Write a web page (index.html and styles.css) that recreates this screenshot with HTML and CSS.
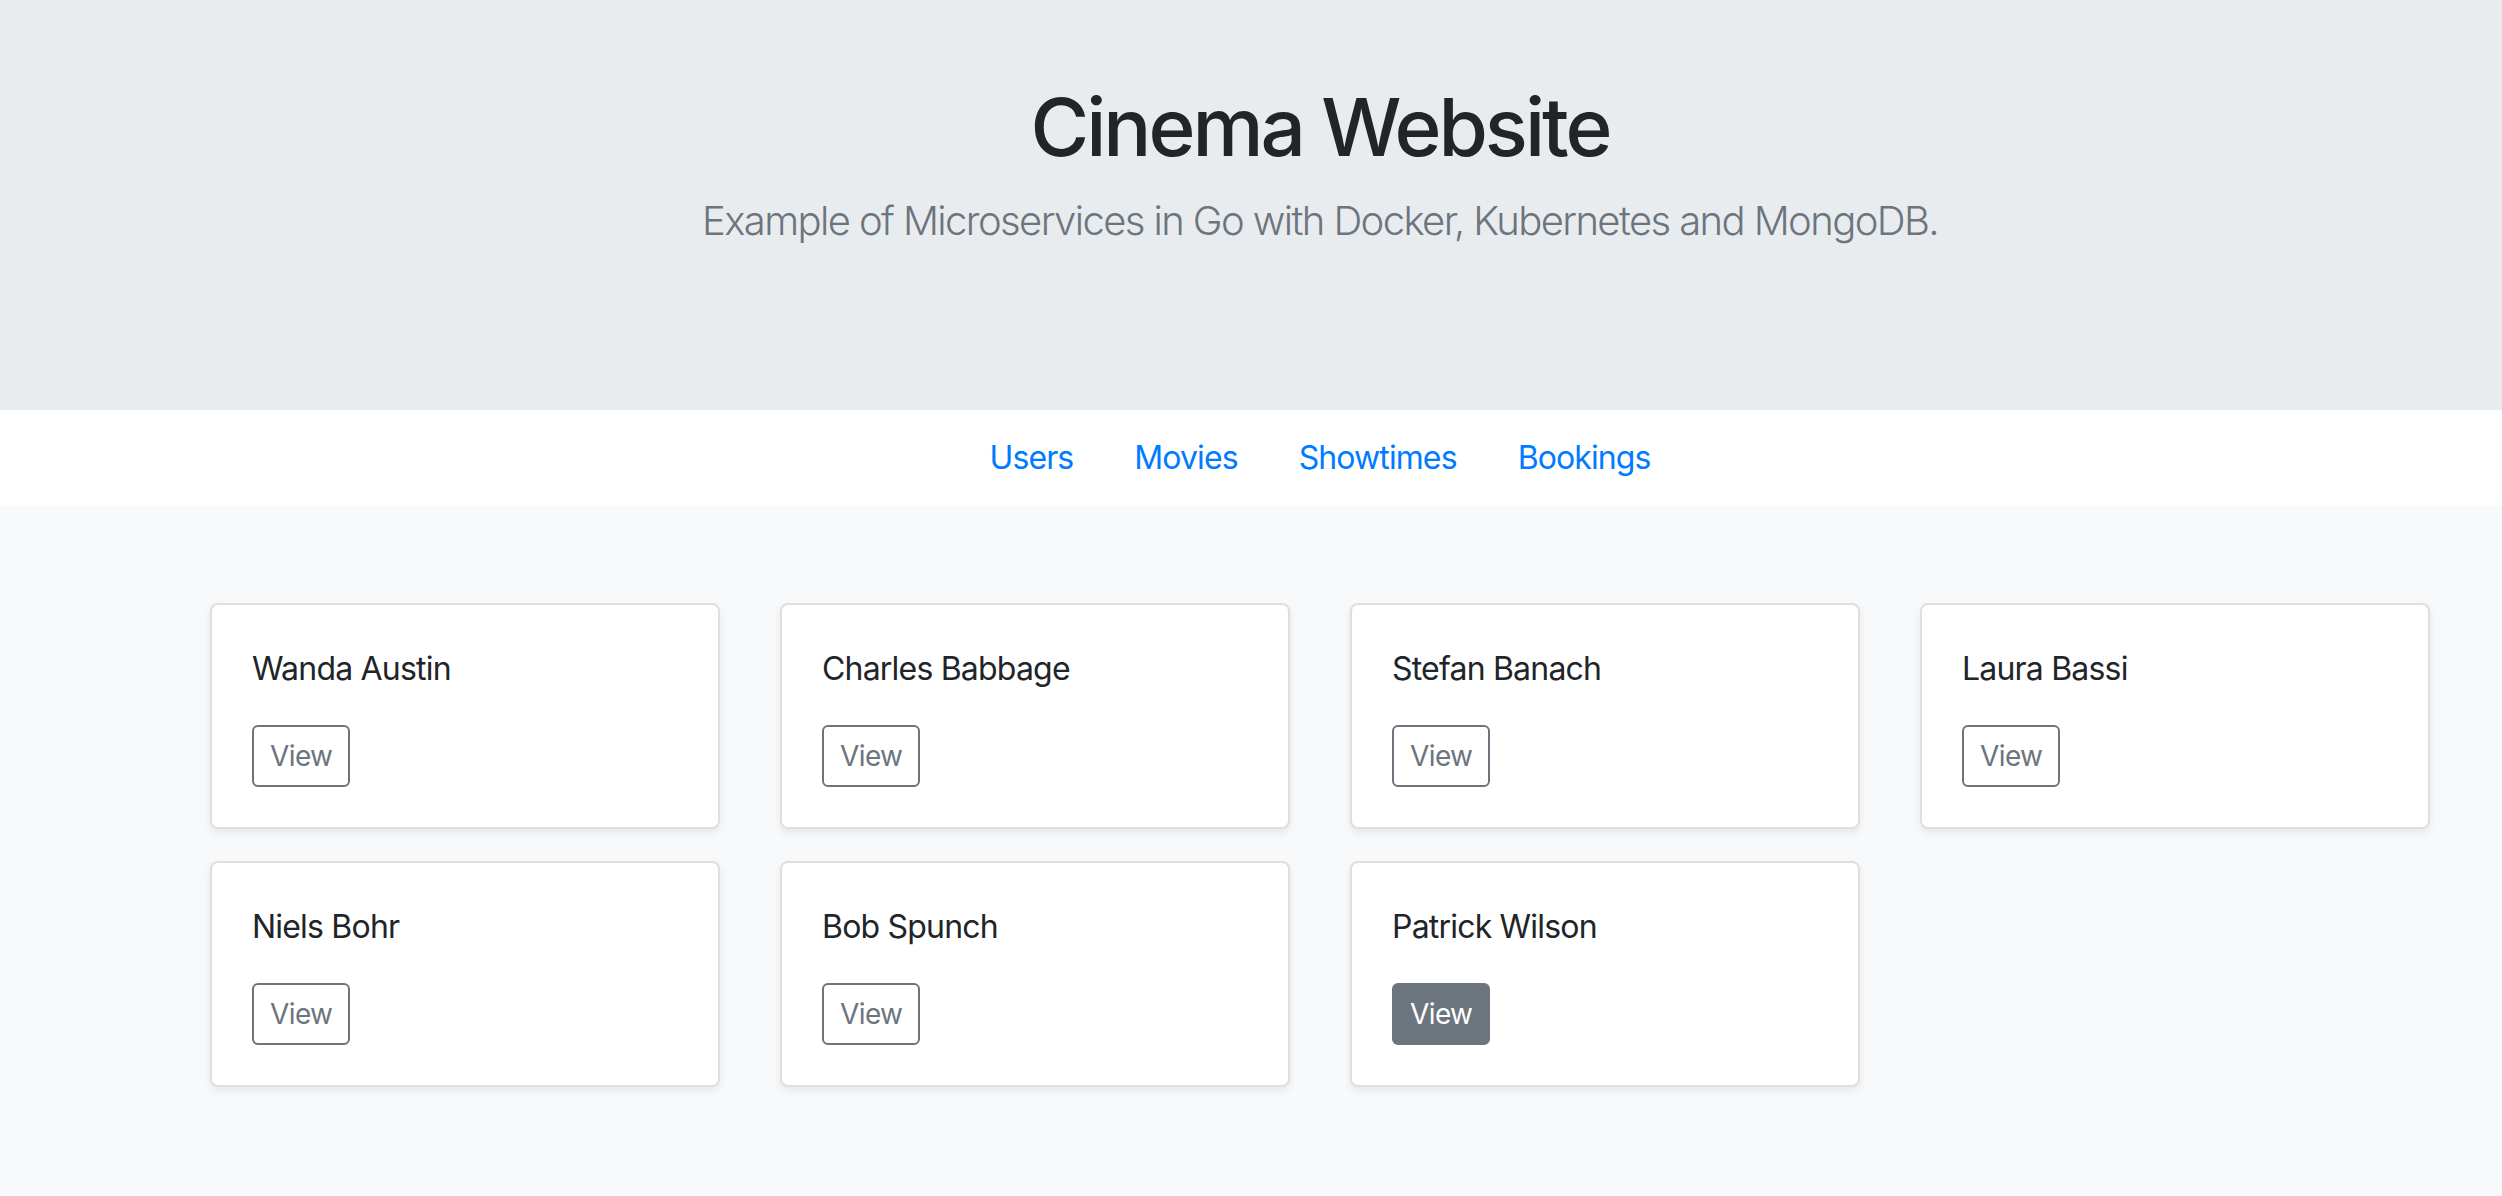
FILE: index.html
```html
<!DOCTYPE html>
<html lang="en">
<head>
<meta charset="utf-8">
<title>Cinema Website</title>
<link rel="stylesheet" href="styles.css">
</head>
<body>
<div class="page">
  <header class="hero">
    <h1 class="hero-title">Cinema Website</h1>
    <p class="hero-lead">Example of Microservices in Go with Docker, Kubernetes and MongoDB.</p>
  </header>
  <nav class="nav">
    <a class="nav-link" href="#">Users</a>
    <a class="nav-link" href="#">Movies</a>
    <a class="nav-link" href="#">Showtimes</a>
    <a class="nav-link" href="#">Bookings</a>
  </nav>
  <main class="main">
    <div class="grid">
      <div class="card"><div class="card-body"><p class="card-text">Wanda Austin</p><a class="btn" href="#">View</a></div></div>
      <div class="card"><div class="card-body"><p class="card-text">Charles Babbage</p><a class="btn" href="#">View</a></div></div>
      <div class="card"><div class="card-body"><p class="card-text">Stefan Banach</p><a class="btn" href="#">View</a></div></div>
      <div class="card"><div class="card-body"><p class="card-text">Laura Bassi</p><a class="btn" href="#">View</a></div></div>
      <div class="card"><div class="card-body"><p class="card-text">Niels Bohr</p><a class="btn" href="#">View</a></div></div>
      <div class="card"><div class="card-body"><p class="card-text">Bob Spunch</p><a class="btn" href="#">View</a></div></div>
      <div class="card"><div class="card-body"><p class="card-text">Patrick Wilson</p><a class="btn btn-active" href="#">View</a></div></div>
    </div>
  </main>
</div>
</body>
</html>
```
FILE: styles.css
```css
html, body {
  margin: 0;
  padding: 0;
  overflow: hidden;
  background: #f8f9fa;
}
body {
  font-family: Inter, "Liberation Sans", sans-serif;
  color: #212529;
}
.page {
  min-height: 1196px;
  background: #f8f9fa;
}
.hero {
  background: #e9ecef;
  height: 410px;
  box-sizing: border-box;
  padding: 79px 0 0 138px;
  text-align: center;
}
.hero-title {
  margin: 0 0 16px;
  font-size: 80px;
  line-height: 96px;
  font-weight: 500;
  letter-spacing: -3px;
  color: #212529;
}
.hero-lead {
  margin: 0;
  font-size: 40px;
  line-height: 60px;
  font-weight: 300;
  letter-spacing: -1.6px;
  color: #6c757d;
}
.nav {
  height: 96px;
  background: #fff;
  padding-left: 138px;
  display: flex;
  justify-content: center;
  align-items: center;
  gap: 61px;
}
.nav-link {
  font-size: 32px;
  line-height: 48px;
  letter-spacing: -0.9px;
  color: #007bff;
  text-decoration: none;
}
.main {
  padding: 97px 0 96px 138px;
}
.grid {
  width: 2220px;
  margin: 0 auto;
  display: grid;
  grid-template-columns: repeat(4, 510px);
  column-gap: 60px;
  row-gap: 32px;
}
.card {
  background: #fff;
  border: 2px solid rgba(0, 0, 0, 0.125);
  border-radius: 8px;
  box-shadow: 0 4px 8px rgba(0, 0, 0, 0.075);
}
.card-body {
  padding: 40px;
}
.card-text {
  margin: 0 0 32px;
  font-size: 32px;
  line-height: 48px;
  letter-spacing: -0.8px;
}
.btn {
  display: inline-block;
  font-size: 28px;
  line-height: 42px;
  padding: 8px 16px;
  border: 2px solid #6c757d;
  border-radius: 6px;
  letter-spacing: -0.6px;
  color: #6c757d;
  text-decoration: none;
}
.btn-active {
  background: #6c757d;
  color: #fff;
}
```
